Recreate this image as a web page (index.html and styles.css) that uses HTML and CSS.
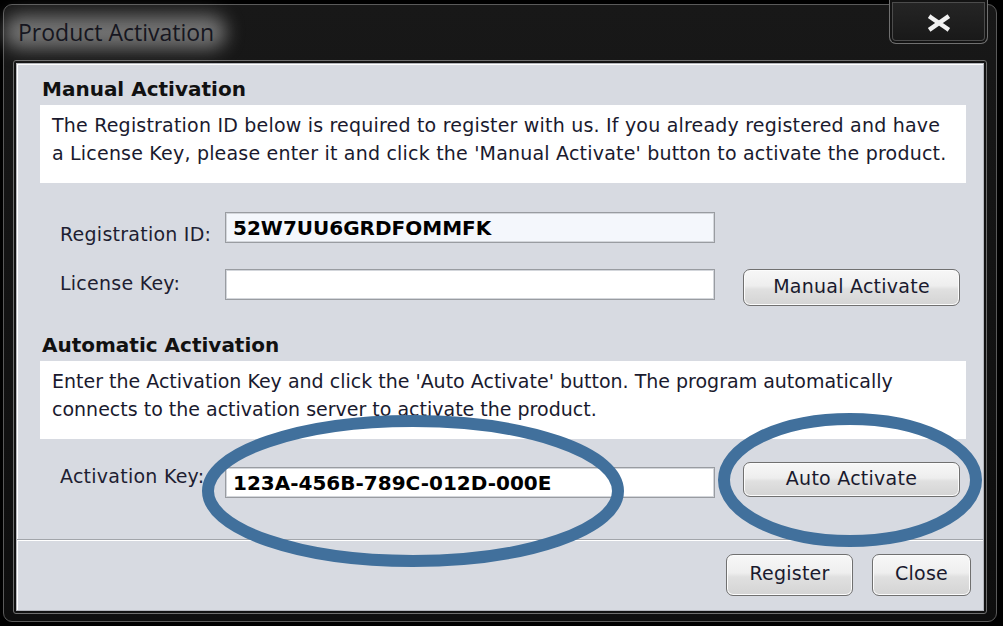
FILE: index.html
```html
<!DOCTYPE html>
<html lang="en">
<head>
    <meta charset="UTF-8">
    <meta name="viewport" content="width=device-width, initial-scale=1.0">
    <title>Product Activation</title>
    <link rel="stylesheet" href="styles.css">
</head>
<body>
    <div class="window">
        <!-- Title bar -->
        <div class="titlebar">
            <span class="title">Product Activation</span>
            <button class="close-btn" type="button" aria-label="Close">
                <svg width="24" height="18" viewBox="0 0 24 18">
                    <path d="M4 3.5 L20 14.5 M20 3.5 L4 14.5" stroke="#f2f2f2" stroke-width="4.5" stroke-linecap="square" fill="none"/>
                </svg>
            </button>
        </div>

        <div class="frame">
            <div class="client">
                <!-- Manual activation -->
                <div class="group">
                    <h2>Manual Activation</h2>
                    <p class="info">The Registration ID below is required to register with us. If you already registered and have<br>a License Key, please enter it and click the 'Manual Activate' button to activate the product.</p>
                </div>

                <div class="field-row row-reg">
                    <label for="reg_id">Registration ID:</label>
                    <input class="field readonly" type="text" id="reg_id" value="52W7UU6GRDFOMMFK" readonly>
                </div>

                <div class="field-row row-license">
                    <label for="license_key">License Key:</label>
                    <input class="field" type="text" id="license_key">
                    <button class="btn side-btn" type="button">Manual Activate</button>
                </div>

                <!-- Automatic activation -->
                <div class="group group-auto">
                    <h2>Automatic Activation</h2>
                    <p class="info">Enter the Activation Key and click the 'Auto Activate' button. The program automatically<br>connects to the activation server to activate the product.</p>
                </div>

                <div class="field-row row-act">
                    <label for="act_key">Activation Key:</label>
                    <input class="field" type="text" id="act_key" value="123A-456B-789C-012D-000E">
                    <button class="btn side-btn" type="button">Auto Activate</button>
                </div>

                <div class="footer">
                    <button class="btn btn-register" type="button">Register</button>
                    <button class="btn btn-close" type="button">Close</button>
                </div>
            </div>
        </div>
    </div>

    <!-- highlight marks drawn over the dialog -->
    <svg class="marks" width="1003" height="626" viewBox="0 0 1003 626">
        <ellipse cx="413" cy="491" rx="205" ry="70" fill="none" stroke="#41709c" stroke-width="12"/>
        <ellipse cx="850" cy="480" rx="126" ry="61" fill="none" stroke="#41709c" stroke-width="12"/>
    </svg>
</body>
</html>
```

FILE: styles.css
```css
* {
    box-sizing: border-box;
}
html, body {
    margin: 0;
}
body {
    width: 1003px;
    height: 626px;
    overflow: hidden;
    position: relative;
    padding: 4px 0 0 3px;
    background: #000;
    font-family: "DejaVu Sans", sans-serif;
}
.window {
    width: 994px;
    height: 618px;
    border: 1px solid #5a5a5a;
    border-radius: 9px;
    background: linear-gradient(#181818, #0e0e0e);
    display: flex;
    flex-direction: column;
}
.titlebar {
    height: 55px;
    display: flex;
    align-items: flex-start;
    padding-left: 14px;
}
.title {
    position: relative;
    z-index: 0;
    margin-top: 12px;
    font-family: "Open Sans", sans-serif;
    font-size: 23px;
    line-height: 30px;
    color: #161620;
}
/* soft glow behind the caption text */
.title::before {
    content: "";
    position: absolute;
    z-index: -1;
    inset: -2px -12px -2px -14px;
    background: rgba(175, 175, 175, 0.6);
    border-radius: 16px;
    filter: blur(9px);
}
.close-btn {
    margin: -5px 8px 0 auto;
    width: 99px;
    height: 44px;
    padding: 2px 0 0;
    border: 1px solid #707070;
    border-top: none;
    border-radius: 0 0 7px 7px;
    background: linear-gradient(#262626, #181818);
    box-shadow: inset 0 0 0 2px #131313, inset 0 0 0 3px #4c4c4c;
    display: flex;
    align-items: center;
    justify-content: center;
}
.frame {
    flex: 1;
    margin: 0 9px 7px;
    border: 1px solid #6e6e6e;
    border-radius: 3px;
    padding: 2px;
    background: #121212;
    display: flex;
}
.client {
    flex: 1;
    border: 1px solid #b4b6bc;
    background: #d7dae1;
    box-shadow: inset 1px 1px 0 #fff;
    display: flex;
    flex-direction: column;
}
.group {
    padding: 0 17px 0 23px;
}
h2 {
    margin: 12px 0 3px;
    padding-left: 2px;
    font-size: 20px;
    line-height: 26px;
    font-weight: bold;
    color: #111;
}
.group-auto h2 {
    margin-top: 26px;
}
.info {
    margin: 0;
    height: 78px;
    padding: 6px 12px 0;
    background: #fff;
    font-size: 19px;
    line-height: 28px;
    letter-spacing: 0.2px;
    color: #1a1a2e;
}
.group-auto .info {
    letter-spacing: 0;
}
.field-row {
    display: flex;
    align-items: flex-start;
    padding-left: 43px;
}
.field-row label {
    width: 165px;
    height: 31px;
    font-size: 19px;
    line-height: 23px;
    letter-spacing: 0.25px;
    color: #1e1e32;
}
.row-reg {
    margin-top: 29px;
}
.row-reg label {
    padding-top: 11px;
}
.row-license {
    margin-top: 26px;
}
.row-license label {
    padding-top: 3px;
}
.row-act {
    margin-top: 23px;
}
.row-act label {
    padding-top: 3px;
}
.row-act .field {
    margin-top: 5px;
}
.field {
    width: 490px;
    height: 31px;
    padding: 0 7px;
    border: 1px solid #999ca1;
    box-shadow: inset 0 0 0 1px #d3d6db;
    background: #fff;
    font-family: "DejaVu Sans", sans-serif;
    font-size: 20px;
    font-weight: bold;
    color: #000;
    outline: none;
}
.field.readonly {
    background: #f4f7fc;
}
.btn {
    font-family: "DejaVu Sans", sans-serif;
    font-size: 19px;
    letter-spacing: 0.25px;
    color: #1a1a2e;
    border: 1px solid #707070;
    border-radius: 7px;
    background: linear-gradient(#f7f7f7, #eeeeee 45%, #e0e0e0 55%, #d4d4d4);
    box-shadow: inset 0 0 0 1px #fcfcfc;
    padding: 0 0 4px;
    cursor: pointer;
}
.side-btn {
    margin-left: 28px;
    width: 217px;
    height: 37px;
}
.row-act .side-btn {
    height: 35px;
}
.footer {
    flex: 1;
    margin-top: 41px;
    border-top: 1px solid #a2a5aa;
    box-shadow: inset 0 1px 0 #fff;
    display: flex;
    justify-content: flex-end;
    align-items: flex-start;
    gap: 19px;
    padding: 14px 12px 0;
}
.btn-register {
    width: 127px;
    height: 42px;
}
.btn-close {
    width: 99px;
    height: 42px;
}
.marks {
    position: absolute;
    left: 0;
    top: 0;
    pointer-events: none;
}
```
